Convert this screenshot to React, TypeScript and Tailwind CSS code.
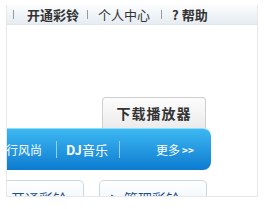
const cjk = '"Noto Sans CJK SC", "Liberation Sans", sans-serif';

export default function App() {
  return (
    <div className="w-[271px] h-[209px] bg-white" style={{ fontFamily: cjk }}>
      <div className="relative ml-[6px] pt-[5px] w-[252px]">
        <div className="h-[192px] overflow-hidden border-x border-b border-[#e8e8e8]">
          {/* top links */}
          <div className="h-[20px] flex items-center text-[13px] leading-none text-[#333] bg-gradient-to-b from-[#fbfcfd] to-[#e6ecf2] border-b border-[#e0e6ec]">
            <span className="ml-[6px] w-px h-[9px] bg-[#999]" />
            <span className="ml-[13px] font-bold">开通彩铃</span>
            <span className="ml-[8px] w-px h-[9px] bg-[#999]" />
            <span className="ml-[10px]">个人中心</span>
            <span className="ml-[11px] w-px h-[9px] bg-[#999]" />
            <span className="ml-[10px] font-bold">?</span>
            <span className="ml-[3px] font-bold">帮助</span>
          </div>

          {/* download button */}
          <div className="mt-[72px] ml-[95px] w-[104px] h-[31px] flex items-center justify-center rounded-t-[4px] border border-b-0 border-[#cfcfcf] bg-gradient-to-b from-[#fdfdfd] to-[#ebebeb] text-[14px] font-bold text-[#333] tracking-[1px]">
            下载播放器
          </div>

          {/* blue tab bar */}
          <div className="-ml-[40px] w-[244px] h-[42px] flex items-center rounded-r-[8px] border-t border-[#8fdcff] bg-gradient-to-b from-[#3db8f2] to-[#0a7bd0] text-white text-[12px] leading-none">
            <span className="ml-[27px]">流行风尚</span>
            <span className="ml-[14px] w-px h-[17px] bg-[#8fd0f5]" />
            <span className="ml-[9px] font-bold text-[13px]">DJ</span>
            <span className="text-[13px]">音乐</span>
            <span className="ml-[11px] w-px h-[17px] bg-[#8fd0f5]" />
            <span className="ml-[36px]">更多</span>
            <span className="ml-[2px] text-[10px] font-bold">&gt;&gt;</span>
          </div>

          {/* action boxes */}
          <div className="mt-[10px] flex gap-[15px] -ml-[40px]">
            <div className="w-[117px] h-[34px] rounded-[5px] border border-[#c9d6e3] bg-gradient-to-b from-white to-[#eaf2fa] pl-[43px] pt-[10px] text-[14px] leading-none text-[#1d4f86]">
              开通彩铃
            </div>
            <div className="w-[108px] h-[34px] rounded-[5px] border border-[#c9d6e3] bg-gradient-to-b from-white to-[#eaf2fa] pl-[10px] pt-[10px] text-[14px] leading-none text-[#1d4f86] flex">
              <span className="text-[9px] mt-[3px]">▶</span>
              <span className="ml-[5px]">管理彩铃</span>
            </div>
          </div>
        </div>
      </div>
    </div>
  );
}
